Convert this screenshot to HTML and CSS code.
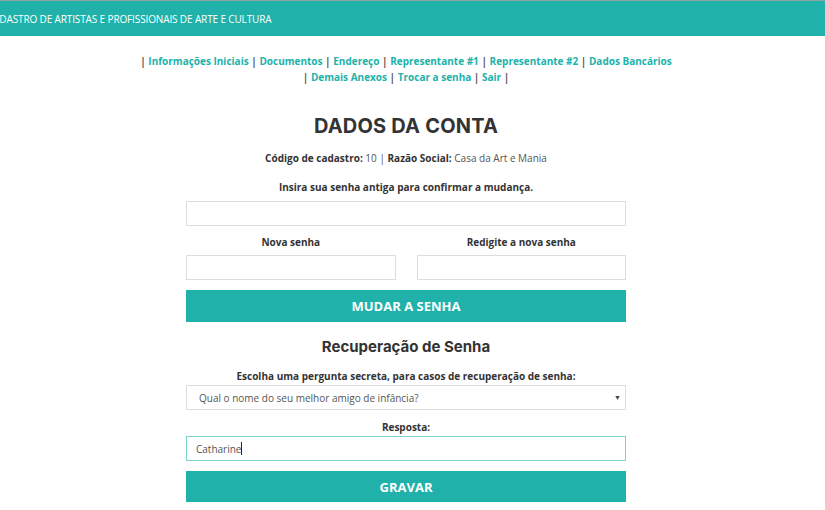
FILE: index.html
```html
<!DOCTYPE html>
<html lang="pt-BR">
<head>
<meta charset="utf-8">
<title>Dados da Conta</title>
<link rel="stylesheet" href="styles.css">
</head>
<body>
<header class="topbar">
  <div class="topbar-title">CADASTRO DE ARTISTAS E PROFISSIONAIS DE ARTE E CULTURA</div>
</header>
<main class="page">
  <nav class="menu">
    <div class="menu-line">| <a href="#">Informações Iniciais</a> | <a href="#">Documentos</a> | <a href="#">Endereço</a> | <a href="#">Representante #1</a> | <a href="#">Representante #2</a> | <a href="#">Dados Bancários</a></div>
    <div class="menu-line">| <a href="#">Demais Anexos</a> | <a href="#">Trocar a senha</a> | <a href="#">Sair</a> |</div>
  </nav>
  <section class="form">
    <h1 class="title">DADOS DA CONTA</h1>
    <p class="info"><b>Código de cadastro:</b> 10 | <b>Razão Social:</b> Casa da Art e Mania</p>
    <label class="label label-first">Insira sua senha antiga para confirmar a mudança.</label>
    <input class="field" type="password">
    <div class="cols">
      <div class="col">
        <label class="label">Nova senha</label>
        <input class="field" type="password">
      </div>
      <div class="col">
        <label class="label">Redigite a nova senha</label>
        <input class="field" type="password">
      </div>
    </div>
    <button class="btn btn-change">MUDAR A SENHA</button>
    <h2 class="subtitle">Recuperação de Senha</h2>
    <label class="label label-q">Escolha uma pergunta secreta, para casos de recuperação de senha:</label>
    <div class="select-wrap">
      <select class="field select">
        <option>Qual o nome do seu melhor amigo de infância?</option>
      </select>
      <span class="arrow">▼</span>
    </div>
    <label class="label label-ans">Resposta:</label>
    <div class="field focused">Catharine<span class="caret"></span></div>
    <button class="btn btn-save">GRAVAR</button>
  </section>
</main>
</body>
</html>
```
FILE: styles.css
```css
* { box-sizing: border-box; }
html, body { margin: 0; padding: 0; background: #fff; }
body {
  font-family: "Open Sans", "Liberation Sans", sans-serif;
  color: #333;
  font-size: 10px;
  width: 825px;
  height: 510px;
  overflow: hidden;
}
.topbar {
  border-top: 1px solid #8fa3a2;
  background: #20b2aa;
  height: 36px;
  display: flex;
  align-items: center;
  overflow: hidden;
}
.topbar-title {
  color: #fff;
  font-size: 10px;
  white-space: nowrap;
  margin-left: -13px;
  letter-spacing: -0.13px;
}
.page {
  width: 812px;
  display: flex;
  flex-direction: column;
  align-items: center;
}
.menu {
  margin-top: 17px;
  text-align: center;
  font-weight: 700;
  color: #555;
  font-size: 10px;
  line-height: 16px;
}
.menu a { color: #20b2aa; text-decoration: none; }
.form {
  width: 440px;
  display: flex;
  flex-direction: column;
  align-items: stretch;
  text-align: center;
}
.title {
  font-family: "Inter", "Liberation Sans", sans-serif;
  font-weight: 700;
  font-size: 20px;
  color: #333;
  margin: 29px 0 0;
  line-height: 24px;
  letter-spacing: 0.2px;
}
.info {
  margin: 12px 0 0;
  line-height: 16px;
  color: #555;
}
.info b { color: #333; }
.label {
  display: block;
  font-weight: 700;
  color: #333;
  line-height: 16px;
  margin-bottom: 5px;
}
.label-first { margin-top: 13px; margin-bottom: 6px; }
.field {
  display: block;
  width: 100%;
  height: 25px;
  border: 1px solid #ddd;
  background: #fff;
  font-family: "Open Sans", "Liberation Sans", sans-serif;
  font-size: 10px;
  color: #555;
  padding: 0 12px;
  margin: 0;
  outline: none;
  border-radius: 0;
  text-align: left;
}
.cols {
  display: flex;
  gap: 21px;
  margin-top: 8px;
}
.col { flex: 1; }
.btn {
  display: block;
  width: 100%;
  height: 32px;
  border: none;
  background: #20b2aa;
  color: #fff;
  font-family: "Open Sans", "Liberation Sans", sans-serif;
  font-weight: 700;
  font-size: 13px;
  padding: 0;
  margin-top: 10px;
}
.subtitle {
  font-family: "Inter", "Liberation Sans", sans-serif;
  font-weight: 700;
  font-size: 15px;
  color: #333;
  margin: 15px 0 0;
  line-height: 20px;
}
.label-q { margin-top: 11px; margin-bottom: 1px; }
.select-wrap { position: relative; }
.select {
  -webkit-appearance: none;
  appearance: none;
  cursor: default;
}
.arrow {
  position: absolute;
  right: 5px;
  top: 8px;
  font-size: 7px;
  color: #444;
  pointer-events: none;
}
.label-ans { margin-top: 9px; margin-bottom: 1px; }
.focused {
  border-color: #7dd3cc;
  display: flex;
  align-items: center;
  padding-left: 9px;
  color: #555;
}
.caret {
  display: inline-block;
  width: 1px;
  height: 13px;
  background: #222;
}
.btn-save {
  margin-top: 10px;
  height: 31px;
  font-size: 13px;
}
```
